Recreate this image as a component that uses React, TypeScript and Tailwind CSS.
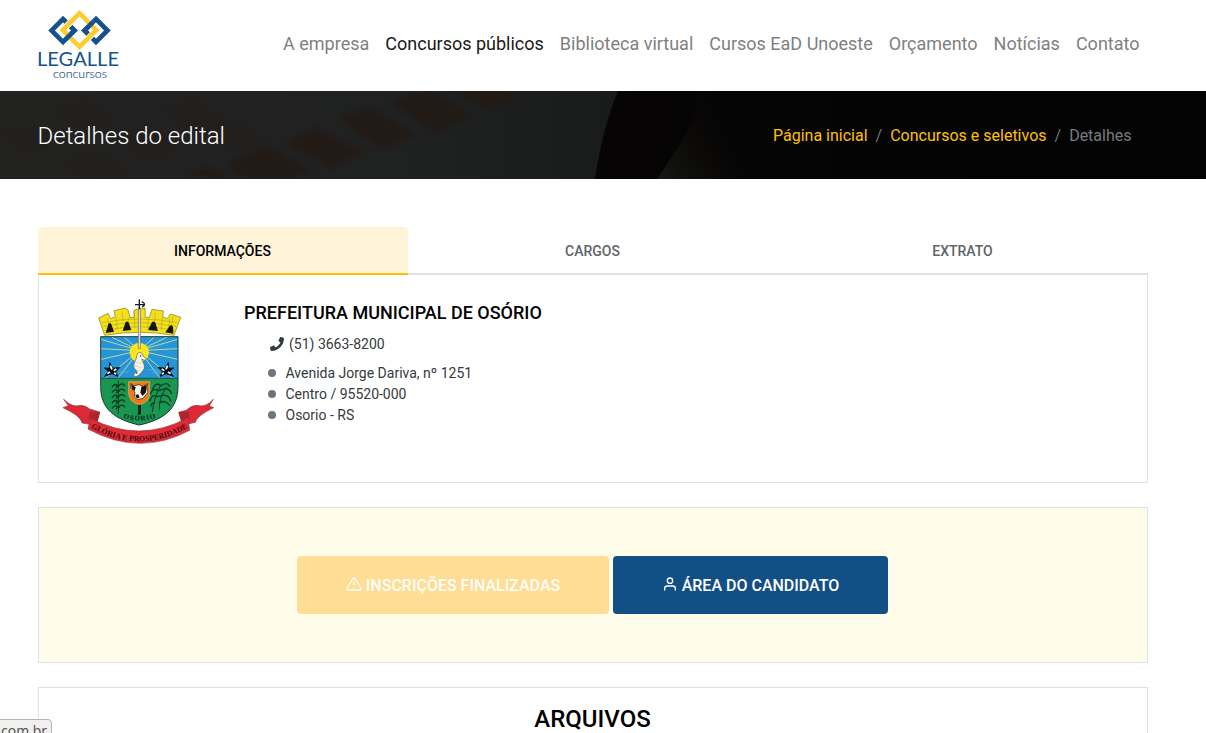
import React from 'react';
import { FaPhone } from 'react-icons/fa';
import { FiAlertTriangle, FiUser } from 'react-icons/fi';

const navItems = [
  'A empresa',
  'Concursos públicos',
  'Biblioteca virtual',
  'Cursos EaD Unoeste',
  'Orçamento',
  'Notícias',
  'Contato',
];

const address = ['Avenida Jorge Dariva, nº 1251', 'Centro / 95520-000', 'Osorio - RS'];

function Logo() {
  return (
    <svg width="82" height="74" viewBox="0 0 82 74" className="block" role="img" aria-label="Legalle Concursos">
      <g fill="none" strokeWidth="4.6">
        <path d="M26 10 37.5 21.5 26 33 14.5 21.5Z" stroke="#15528d" />
        <path d="M59 10 70.5 21.5 59 33 47.5 21.5Z" stroke="#15528d" />
        <path d="M42.5 4.2 59.3 21 42.5 37.8 25.7 21Z" stroke="#fff" strokeWidth="6.4" />
        <path d="M42.5 4.2 59.3 21 42.5 37.8 25.7 21Z" stroke="#ffcb2d" />
        <path d="M34 18 37.5 21.5 29 30" stroke="#15528d" />
        <path d="M51 25 47.5 21.5 56 13" stroke="#15528d" />
      </g>
      <text x="0" y="57" textLength="82" lengthAdjust="spacingAndGlyphs" fontFamily="Lato, sans-serif" fontSize="18.5" fill="#15528d">LEGALLE</text>
      <text x="16" y="68.6" textLength="54" lengthAdjust="spacingAndGlyphs" fontFamily="Lato, sans-serif" fontSize="12.5" fontWeight="300" fill="#15528d" stroke="#15528d" strokeWidth=".15">concursos</text>
    </svg>
  );
}

function BannerTexture() {
  return (
    <svg className="absolute inset-0 h-full w-full" viewBox="0 0 1206 88" preserveAspectRatio="none" aria-hidden="true">
      <defs>
        <filter id="soft" x="-10%" y="-20%" width="120%" height="140%" colorInterpolationFilters="sRGB"><feGaussianBlur stdDeviation="2.5" /></filter>
        <linearGradient id="wall"><stop offset="0" stopColor="#222221" /><stop offset=".65" stopColor="#202121" /><stop offset="1" stopColor="#191a1a" /></linearGradient>
        <linearGradient id="dark"><stop offset="0" stopColor="#050401" /><stop offset=".2" stopColor="#080605" /><stop offset="1" stopColor="#030303" /></linearGradient>
        <linearGradient id="edge" x1="657" y1="88" x2="745" y2="40" gradientUnits="userSpaceOnUse"><stop offset="0" stopColor="#181817" /><stop offset="1" stopColor="#080605" stopOpacity="0" /></linearGradient>
      </defs>
      <rect width="1206" height="88" fill="url(#dark)" />
      <path d="M0 0H618Q603 35 595 88H0Z" fill="url(#wall)" />
      <g fill="#221a15" filter="url(#soft)">
        <path d="M228 72 268 56 312 80 278 90 236 84Z" />
        <path d="M284 51 318 38 364 61 332 77Z" />
        <path d="M338 26 370 18 416 44 382 58Z" />
        <path d="M390 10 428 0 470 24 436 42Z" />
        <path d="M460 0H516L510 12 486 18Z" />
        <path d="M188 84 208 77 232 88Z" />
      </g>
      <g fill="#231e1b" opacity=".7" filter="url(#soft)">
        <path d="M58 72 96 60 130 80 98 90Z" />
        <path d="M112 46 144 36 180 56 150 68Z" />
        <path d="M160 18 194 10 230 32 200 44Z" />
        <path d="M0 42 24 34 54 52 24 62Z" />
        <path d="M50 18 86 10 118 28 88 38Z" />
        <path d="M206 42 240 34 268 50 240 60Z" />
      </g>
      <path d="M697 0V18Q692 38 657 88H900V0Z" fill="url(#edge)" />
    </svg>
  );
}

function Starfish({ x, flip }: { x: number; flip?: boolean }) {
  return (
    <g transform={`translate(${x} 242) scale(${flip ? -1 : 1} 1)`}>
      <path d="M-8-24 1-7 23-10 10 3 17 17-1 9-23 17-12 2-24-8-9-7Z" fill="#0b1016" stroke="#0b1016" strokeWidth="3" strokeLinejoin="round" />
      <path d="M-6-15-1-4M12-5 4 0M-15 9-7 4M6 6 11 11" fill="none" stroke="#fff" strokeWidth="5" />
    </g>
  );
}

function Palm({ x }: { x: number }) {
  return (
    <g transform={`translate(${x} 0) scale(.8 1)`} fill="none" stroke="#07351c">
      <path d="M0 372V272" strokeWidth="3" />
      {[284, 300, 316, 332, 348].map((y) => (
        <path key={y} d={`M0 ${y + 6}Q-12 ${y - 8}-24 ${y + 8}M0 ${y + 6}Q12 ${y - 10} 25 ${y + 4}M-4 ${y + 4}-9 ${y + 10}M4 ${y + 4}9 ${y + 9}`} strokeWidth="4" />
      ))}
    </g>
  );
}

function Crest() {
  const rays = [
    [135, 148], [135, 176], [135, 208], [148, 264], [186, 264], [168, 142], [205, 142],
    [365, 148], [365, 176], [365, 208], [350, 264], [312, 264], [332, 142], [294, 142],
  ];
  return (
    <svg width="151" height="146" viewBox="21 27 453 438" className="block" role="img" aria-label="Brasão de Osório">
      <defs>
        <clipPath id="shield"><path d="M134 140H366V290C366 358 322 389 250 405C178 389 134 358 134 290Z" /></clipPath>
        <path id="motto" d="M101 411Q250 498 400 411" />
        <path id="city" d="M202 384Q251 400 302 382" />
      </defs>
      <path d="M128 84 156 70 164 86 178 80 174 62 208 54 216 60 222 82H234V60L267 54 268 82H280L288 58 322 63 320 80 334 86 344 72 374 82 354 136Q250 118 146 136Z" fill="#f3e01c" stroke="#867900" strokeWidth="2" />
      <g fill="none" stroke="#a39b13" strokeWidth="1.5">
        <path d="M138 98Q250 76 364 98M142 109Q250 87 360 109M146 121Q250 99 356 121M154 84 160 109M180 81 184 120M198 67 202 93M217 82 220 117M234 65 237 114M277 83 275 114M298 68 296 93M320 81 315 121M341 86 336 124M350 80 347 106" />
      </g>
      <path d="M149 129 157 103Q161 95 166 103L174 125ZM200 123 208 98Q213 91 218 98L226 120ZM276 120 287 98Q293 91 298 98L306 123ZM328 127 341 108Q347 103 351 111L352 131Z" fill="#17130b" />
      <g clipPath="url(#shield)">
        <path d="M134 140H366V265H134Z" fill="#2694d9" />
        {rays.map(([x, y]) => <path key={`${x}-${y}`} d={`M250 182 ${x} ${y}`} stroke="#b9d99b" strokeWidth="3" />)}
        <circle cx="250" cy="187" r="29" fill="#ffe51b" />
        <path d="M134 265H366V410H134Z" fill="#199651" />
        <path d="M134 265H366" stroke="#174d35" strokeWidth="3" />
        <path d="M188 246H218M278 239 316 241M289 247H322" stroke="#62b7df" strokeWidth="2" />
      </g>
      <path d="M134 140H366V290C366 358 322 389 250 405C178 389 134 358 134 290Z" fill="none" stroke="#17372d" strokeWidth="3" />
      <Starfish x={169} />
      <Starfish x={329} flip />
      <path d="M244 191Q257 181 262 199L271 207 267 211 257 208Q272 233 260 243 253 254 243 259 231 262 234 251 238 246 243 251 247 245 234 234 231 221 239 211Z" fill="#f5f4e9" stroke="#57604c" strokeWidth="2" />
      <circle cx="254" cy="198" r="2" />
      <path d="M239 217 258 220M237 228 257 232M241 239 253 242" stroke="#a2a495" />
      <path d="M247 54V176H253V54Z" fill="#ece9df" stroke="#69645d" strokeWidth="2" />
      <path d="M250 28V58M237 44H264M257 35Q274 42 258 51" fill="none" stroke="#191919" strokeWidth="4" />
      <Palm x={187} />
      <g fill="none" stroke="#073c20" strokeWidth="3">
        <path d="M289 366Q292 330 314 285M310 361Q308 324 332 290" />
        <path d="M314 286Q297 276 290 298M313 288Q336 272 341 291M306 301Q290 292 282 314M308 302Q339 287 347 312M301 319Q288 311 281 334M302 321Q338 306 344 334M297 340Q286 336 284 350M309 340Q325 326 342 347" strokeWidth="4" />
      </g>
      <path d="M246 340H255V374H246Z" fill="#17291b" />
      <path d="M218 275H281V313Q278 338 250 344 221 337 218 312Z" fill="#f07a1c" stroke="#f1b35d" strokeWidth="2" />
      <path d="M224 281 234 287 249 284 262 290 275 281 272 295 276 307 261 325 244 329 235 320 237 307 224 294Z" fill="#f8f3e8" stroke="#1c1817" strokeWidth="2" />
      <path d="M225 283 239 292 236 303 228 297ZM256 290 272 285 270 307 260 318 253 308ZM238 315 247 313 251 323 242 325Z" fill="#171514" />
      <text fontFamily="Liberation Serif, serif" fontSize="21" fontWeight="700" fill="#092415"><textPath href="#city" textLength="99">OSÓRIO</textPath></text>
      <g stroke="#96373b" strokeWidth="2" strokeLinejoin="round">
        <path d="M23 328Q48 354 75 346 89 347 101 357L131 366 124 393 99 402 78 399Q75 378 21 353L37 347Z" fill="#db2936" />
        <path d="M472 328Q450 354 423 346 405 346 392 360L369 367 376 393 399 401 418 397Q421 378 473 353L460 347Z" fill="#db2936" />
        <path d="M101 366 131 367 124 394 99 385Z" fill="#b7202d" />
        <path d="M398 366 368 367 377 393 400 385Z" fill="#b7202d" />
        <path d="M103 385Q250 462 396 383L401 421Q250 501 96 417Z" fill="#e02a35" />
      </g>
      <text fontFamily="Liberation Serif, serif" fontSize="24" fontWeight="700" fill="#3f0c13"><textPath href="#motto" startOffset="4" textLength="306" lengthAdjust="spacingAndGlyphs">GLÓRIA E PROSPERIDADE</textPath></text>
    </svg>
  );
}

export default function App() {
  return (
    <div className="relative h-[733px] overflow-hidden bg-white font-['Roboto',sans-serif] text-black">
      <header className="h-[91px] pr-[58.5px] pl-[37px]">
        <div className="flex items-start justify-between">
          <div className="pt-[9px]"><Logo /></div>
          <nav className="flex h-[86px] items-center text-[18px] whitespace-nowrap text-[#7f7f7f]">
            {navItems.map((item) => (
              <a key={item} href="#" className={item === 'Concursos públicos' ? 'px-2 text-[#191919]' : 'px-2'}>{item}</a>
            ))}
          </nav>
        </div>
      </header>

      <section className="relative h-[88px]">
        <BannerTexture />
        <div className="relative flex h-full items-center justify-between pt-0.5 pr-[74.5px] pl-[37.5px]">
          <h1 className="text-2xl font-light text-white">Detalhes do edital</h1>
          <nav className="flex gap-2 text-base text-[#ffc107]">
            <a href="#">Página inicial</a>
            <span className="text-[#6c757d]">/</span>
            <a href="#">Concursos e seletivos</a>
            <span className="text-[#6c757d]">/</span>
            <span className="text-[#7a7b7d]">Detalhes</span>
          </nav>
        </div>
      </section>

      <main className="mt-12 ml-[37.5px] w-[1110px]">
        <div className="grid h-12 grid-cols-3 text-center text-sm font-medium text-[#626466]">
          <button className="rounded-t border-b-2 border-[#ffc107] bg-[#fff4d9] pt-0.5 text-black">INFORMAÇÕES</button>
          <button className="border-b-2 border-[#dee2e6] pt-0.5">CARGOS</button>
          <button className="border-b-2 border-[#dee2e6] pt-0.5">EXTRATO</button>
        </div>

        <section className="flex h-52 border border-t-0 border-[#dee2e6] pt-6 pl-6">
          <Crest />
          <div className="ml-[30.5px] pt-0.5">
            <h2 className="text-[18px] leading-6 font-medium">PREFEITURA MUNICIPAL DE OSÓRIO</h2>
            <div className="mt-2 ml-[26px] flex h-[21px] items-center gap-[5px] text-sm text-[#343a40]">
              <FaPhone size={14} />
              <span>(51) 3663-8200</span>
            </div>
            <ul className="mt-[9px] ml-[23.5px] text-sm leading-[21px] text-[#343a40]">
              {address.map((line) => (
                <li key={line} className="flex items-center gap-[10px]"><span className="mb-px size-2 rounded-full bg-[#6c757d]" />{line}</li>
              ))}
            </ul>
          </div>
        </section>

        <section className="mt-6 flex h-[156px] items-center justify-center gap-1 border border-[#dee2e6] bg-[#fffde9] text-base font-medium text-white">
          <button className="flex h-[58px] w-[312px] items-center justify-center gap-1 rounded bg-[#ffdd94] pt-0.5 text-[#fffefa]">
            <FiAlertTriangle size={16} strokeWidth={2} className="-mt-1" />INSCRIÇÕES FINALIZADAS
          </button>
          <button className="flex h-[58px] w-[275px] items-center justify-center gap-1 rounded bg-[#124f87] pt-0.5">
            <FiUser size={16} strokeWidth={2} className="-mt-1" />ÁREA DO CANDIDATO
          </button>
        </section>

        <section className="mt-6 h-24 border border-[#dee2e6] pt-[15px] text-center">
          <h2 className="text-2xl leading-8 font-medium">ARQUIVOS</h2>
        </section>
      </main>

      <div className="absolute bottom-[-5px] left-[-2px] h-[19px] w-[54px] rounded-tr border border-[#b7b5b2] bg-[#f1f0ef] pl-[2px] font-['Open_Sans',sans-serif] text-[14px] leading-[22px] text-[#4a4a4a]">com.br</div>
    </div>
  );
}
